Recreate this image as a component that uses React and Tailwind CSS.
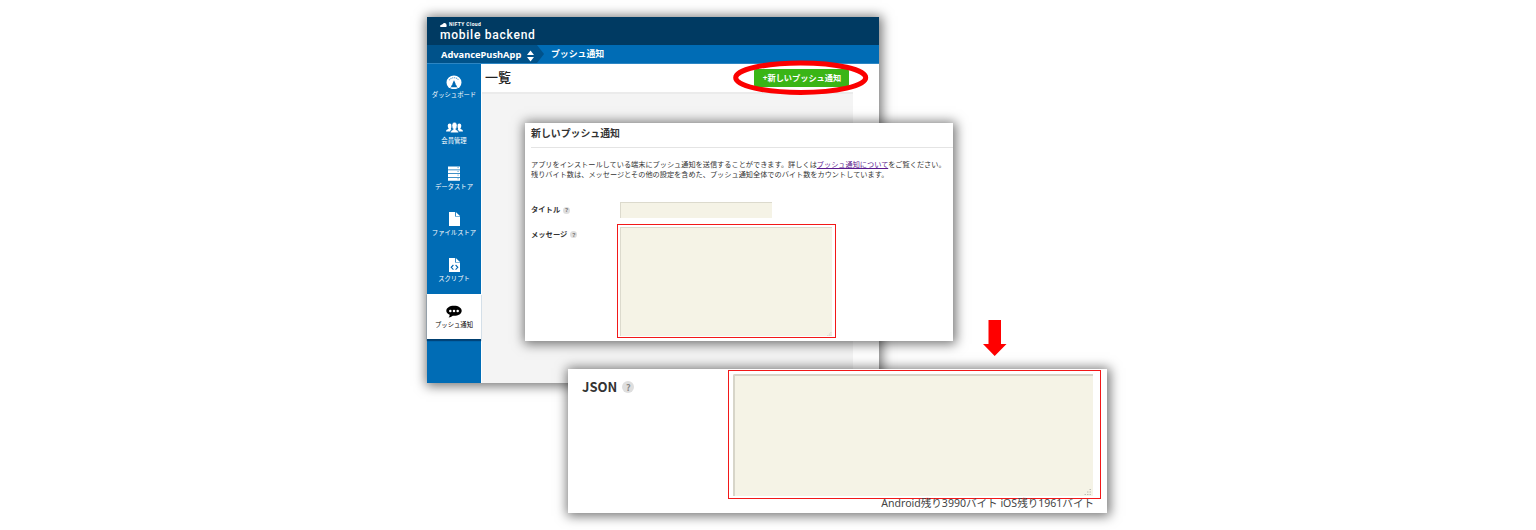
import React from 'react';

const GaugeIcon = () => (
  <svg width="16" height="15" viewBox="0 0 16 15" fill="none">
    <path d="M2.6 13.4A7.5 7 0 1 1 13.400 13.400Q12 14.800 11 13Q10.500 10 8 10Q5.500 10 5 13Q4 14.800 2.600 13.400Z" fill="#fff" />
    <path d="M3 6.200Q8 1.200 13 6.200" stroke="#5c9fd0" strokeWidth="1.100" strokeDasharray="1.200 .7" />
    <path d="M8 6.200L9.500 9.400A1.600 1.600 0 1 1 6.500 9.400Z" fill="#0068b3" />
    <path d="M4.500 13.200h7v1.200q-3.500 1-7 0z" fill="#fff" />
  </svg>
);

const UsersIcon = () => (
  <svg width="17" height="11" viewBox="0 0 17 11" fill="#fff">
    <path d="M0 9.6Q0 7.8 1.8 7.3L2.7 6.8Q1.7 5.6 1.7 3.6Q1.8 1.5 3.7 1.5Q5.6 1.5 5.6 3.8Q5.6 5.6 4.8 6.7L5.4 7.2Q4.3 8 4.2 9.6Z" />
    <path d="M17 9.6Q17 7.8 15.2 7.3L14.3 6.8Q15.3 5.6 15.3 3.6Q15.2 1.5 13.3 1.5Q11.4 1.5 11.4 3.8Q11.4 5.6 12.2 6.7L11.6 7.2Q12.7 8 12.8 9.6Z" />
    <path d="M4.400 10.800Q4.400 8.600 6.300 8L7.300 7.300Q5.900 5.800 5.900 3.200Q6.200.3 8.500.3Q10.800.3 11.100 3.200Q11.100 5.800 9.700 7.300L10.700 8Q12.600 8.600 12.600 10.800Z" stroke="#0068b3" strokeWidth=".5" />
  </svg>
);

const ServerIcon = () => (
  <svg width="12" height="15" viewBox="0 0 12 15">
    <path d="M0 .6h12v3H0zM0 4.3h12v3H0zM0 8h12v3H0zM0 11.7h12v3H0z" fill="#fff" />
    <path d="M9.4 1.6h1.4M9.4 5.4h1.4M9.4 9.1h1.4M9.4 12.8h1.4" stroke="#5c9fd0" strokeWidth=".8" />
  </svg>
);

const FileIcon = () => (
  <svg width="11" height="14" viewBox="0 0 11 14">
    <path d="M0 0h6v4.600h5V14H0zM6.800 0L11 3.900H6.800z" fill="#fff" />
  </svg>
);

const ScriptIcon = () => (
  <svg width="11" height="14" viewBox="0 0 11 14" fill="none">
    <path d="M0 0h6v4.600h5V14H0zM6.800 0L11 3.900H6.800z" fill="#fff" />
    <path d="M4.400 7L2.200 9.300L4.400 11.600M6.600 7L8.800 9.300L6.600 11.600" stroke="#0068b3" strokeWidth="1.100" />
  </svg>
);

const ChatIcon = () => (
  <svg width="16" height="13" viewBox="0 0 16 13">
    <path d="M8 .7C12.400 .7 15.700 2.800 15.700 5.800C15.700 8.800 12.400 10.800 8 10.800L6.800 10.700Q5 12.400 2.600 12.500Q3.800 11.200 3.700 9.800Q.3 8.400 .3 5.800C.3 2.800 3.600 .7 8 .7Z" fill="#000" />
    <circle cx="4.300" cy="5.900" r="1.250" fill="#fff" />
    <circle cx="8" cy="5.900" r="1.250" fill="#fff" />
    <circle cx="11.700" cy="5.900" r="1.250" fill="#fff" />
  </svg>
);

const items = [
  { label: 'ダッシュボード', Icon: GaugeIcon },
  { label: '会員管理', Icon: UsersIcon },
  { label: 'データストア', Icon: ServerIcon },
  { label: 'ファイルストア', Icon: FileIcon },
  { label: 'スクリプト', Icon: ScriptIcon },
  { label: 'プッシュ通知', Icon: ChatIcon, active: true },
];

function Help({ large }) {
  return large ? (
    <span className="flex h-3 w-3 items-center justify-center rounded-full bg-[#dedede] text-[9px] font-bold leading-none text-[#888]">?</span>
  ) : (
    <span className="flex h-[7px] w-[7px] items-center justify-center rounded-full bg-[#dedede] text-[6px] font-bold leading-none text-[#777]">?</span>
  );
}

function Grip({ size }) {
  return (
    <svg width={size} height={size} viewBox="0 0 8 8" stroke="#bdbdb5" strokeWidth="1" strokeDasharray="1.500 1">
      <path d="M.5 7.500h7.500M3 5h5M5.500 2.500h2.500" />
    </svg>
  );
}

function Dashboard() {
  return (
    <section className="absolute left-[427px] top-[17px] flex h-[366px] w-[452px] flex-col bg-white shadow-[1px_1px_11px_2px_rgba(0,0,0,0.55)]">
      <header className="flex h-7 flex-col bg-[#003a62] pl-[13px] pt-[5px] text-white">
        <div className="flex h-[5px] items-center gap-[2px]">
          <svg width="7" height="4" viewBox="0 0 7 4" fill="#fff">
            <path d="M1 4Q0 4 0 3Q.1 2 1.300 2Q1.700 1 2.600 1.300Q3.400 0 4.800 .1Q6.600 .4 6.600 2.200Q7 4 6 4Z" />
          </svg>
          <span className="font-['Roboto',sans-serif] text-[5px] font-bold leading-none tracking-[0.35px]">NIFTY Cloud</span>
        </div>
        <div className="origin-left scale-x-[0.895] whitespace-nowrap font-['Roboto',sans-serif] text-[13.500px] font-medium leading-[14px] tracking-[0.800px]">mobile backend</div>
      </header>
      <nav className="flex h-[19px] items-center border-b border-[#2c86c4] bg-[#006cb5] text-white">
        <div className="flex h-full w-[110px] items-center bg-[#00528a] pl-[14px] pt-px">
          <span className="w-[85px] whitespace-nowrap text-[9.300px] font-bold leading-none">AdvancePushApp</span>
          <svg className="mt-[2px] shrink-0" width="9" height="12" viewBox="0 0 9 12" fill="#fff">
            <path d="M4.500 .5L8 5H1ZM4.500 11.500L1 7H8Z" />
          </svg>
        </div>
        <svg width="8" height="18" viewBox="0 0 8 18" fill="#00528a"><path d="M0 0L7 9L0 18Z" /></svg>
        <span className="pl-[6px] text-[8.900px] font-bold leading-none">プッシュ通知</span>
      </nav>
      <div className="flex min-h-0 flex-1">
        <aside className="flex w-[54px] flex-col bg-[#006cb5]">
          {items.map(({ label, Icon, active }) => (
            <div
              key={label}
              className={
                active
                  ? 'flex h-[46px] flex-col items-center border-b border-[#003f70] bg-white text-black shadow-[0_1px_1px_#00447a]'
                  : 'flex h-[46px] flex-col items-center text-white'
              }
            >
              <div className="flex h-[34px] items-center justify-center"><Icon /></div>
              <span className="-mt-[7px] whitespace-nowrap text-[6.350px] leading-[7px]">{label}</span>
            </div>
          ))}
        </aside>
        <main className="flex min-w-0 flex-1 flex-col">
          <div className="flex h-7 shrink-0 items-center justify-between pl-1 pr-[30px]">
            <h1 className="pb-[2px] text-[13px] font-medium leading-none text-[#222]">一覧</h1>
            <div className="relative">
              <button className="flex h-[18px] w-[95px] items-center justify-center rounded-[2px] bg-[#3ab516] pl-px pt-px text-[8.200px] font-bold leading-none text-white">+新しいプッシュ通知</button>
              <svg className="absolute -left-[21px] -top-[10px]" width="137" height="38" viewBox="0 0 137 38" fill="none">
                <ellipse cx="67.700" cy="18.700" rx="65" ry="14.700" stroke="#fb0000" strokeWidth="5" />
              </svg>
            </div>
          </div>
          <div className="ml-px w-[371px] flex-1 border-t-2 border-[#ebebeb] bg-[#f4f4f4]" />
        </main>
      </div>
    </section>
  );
}

function PushForm() {
  return (
    <section className="absolute left-[525px] top-[123px] flex h-[218px] w-[428px] flex-col bg-white pl-[6px] text-[#333] shadow-[1px_1px_11px_2px_rgba(0,0,0,0.55)]">
      <h2 className="flex h-[25px] items-center border-b border-[#e4e4e4] pb-[2px] text-[9.900px] font-bold leading-none">新しいプッシュ通知</h2>
      <p className="mt-[11px] whitespace-nowrap text-[7.180px] leading-[10px]">
        アプリをインストールしている端末にプッシュ通知を送信することができます。詳しくは<a className="text-[#5b1a8e] underline">プッシュ通知について</a>をご覧ください。
        <br />
        残りバイト数は、メッセージとその他の設定を含めた、プッシュ通知全体でのバイト数をカウントしています。
      </p>
      <div className="mt-[23px] flex h-4">
        <div className="flex w-[89px] items-center gap-[3px] text-[7.300px] font-bold leading-none">タイトル<Help /></div>
        <div className="h-4 w-[152px] border-l border-t border-[#dcdacd] bg-[#f5f3e6]" />
      </div>
      <div className="mt-[6px] flex">
        <div className="flex h-[21px] w-[86px] items-center gap-[3px] text-[7.300px] font-bold leading-none">メッセージ<Help /></div>
        <div className="h-[114px] w-[219px] border border-[#f21818] p-[2px]">
          <div className="flex h-[109px] w-[212px] items-end justify-end border-l border-t border-[#dcdacd] bg-[#f5f3e6]"><Grip size={5} /></div>
        </div>
      </div>
    </section>
  );
}

function JsonForm() {
  return (
    <section className="absolute left-[568px] top-[369px] flex h-[144px] w-[539px] flex-col bg-white text-[#333] shadow-[1px_1px_11px_2px_rgba(0,0,0,0.55)]">
      <div className="flex pt-px">
        <div className="flex h-[34px] w-[160px] items-center pl-[14px] font-['Noto_Sans_CJK_JP',sans-serif] text-[13px] font-bold leading-none">
          <span className="mr-[5px] pb-[2px]">JSON</span>
          <Help large />
        </div>
        <div className="h-[129px] w-[373px] border border-[#f21818] p-[3px] pl-[4px]">
          <div className="flex h-[122px] w-[360px] items-end justify-end rounded-tl-[2px] border-l-2 border-t-2 border-[#d7d5c9] bg-[#f5f3e6] p-px"><Grip size={8} /></div>
        </div>
      </div>
      <div className="-mt-px self-end whitespace-nowrap pr-[13px] text-[10.550px] leading-[11px] text-[#444]">Android残り3990バイト iOS残り1961バイト</div>
    </section>
  );
}

export default function App() {
  return (
    <div className="relative h-[530px] w-[1536px] overflow-hidden bg-white font-['Noto_Sans','Noto_Sans_CJK_JP',sans-serif]">
      <Dashboard />
      <PushForm />
      <svg className="absolute left-[983px] top-[320px]" width="24" height="36" viewBox="0 0 24 36" fill="#ff0000">
        <path d="M5.500 0H18V24H23.500L11.700 36L0 24H5.500Z" />
      </svg>
      <JsonForm />
    </div>
  );
}
